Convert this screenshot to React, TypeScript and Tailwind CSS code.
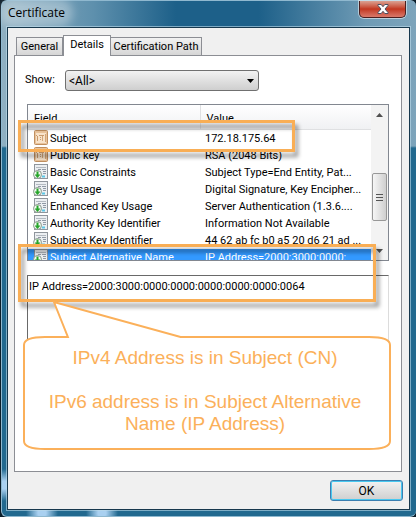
import React from 'react';

type Field = {
  name: string;
  value: string;
  extension?: boolean;
  selected?: boolean;
};

const fields: Field[] = [
  { name: 'Subject', value: '172.18.175.64' },
  { name: 'Public key', value: 'RSA (2048 Bits)' },
  { name: 'Basic Constraints', value: 'Subject Type=End Entity, Pat...', extension: true },
  { name: 'Key Usage', value: 'Digital Signature, Key Encipher...', extension: true },
  { name: 'Enhanced Key Usage', value: 'Server Authentication (1.3.6....', extension: true },
  { name: 'Authority Key Identifier', value: 'Information Not Available', extension: true },
  { name: 'Subject Key Identifier', value: '44 62 ab fc b0 a5 20 d6 21 ad ...', extension: true },
  { name: 'Subject Alternative Name', value: 'IP Address=2000:3000:0000:', extension: true, selected: true },
];

const PropertyIcon: React.FC = () => (
  <svg width="16" height="16" viewBox="0 0 16 16" className="block">
    <rect x="1.5" y="0.5" width="13" height="14" rx="1" fill="#e9c39b" stroke="#c08f60" />
    <rect x="3" y="3" width="10" height="10" fill="#f8e3cb" />
    <path d="M3 5.5h1M6 5.5h5M4.5 6v5M7 7.5h1M7 9.5h1" stroke="#c99a6c" fill="none" />
    <path d="M9.5 6v5M12.5 4v8" stroke="#d3a679" fill="none" />
  </svg>
);

const ExtensionIcon: React.FC = () => (
  <svg width="16" height="16" viewBox="0 0 16 16" className="block">
    <rect x="1.5" y="0.5" width="13" height="14" fill="#eceff2" stroke="#8f959c" />
    <path d="M3 3.5h10" stroke="#b4bac1" />
    <path d="M5 5.5h3M9 5.5h4M10 7.5h3M10 9.5h3" stroke="#9099a5" />
    <path d="M9 12.5h3" stroke="#5cc7e6" strokeWidth="2" />
    <circle cx="4.5" cy="10.5" r="4" fill="#f7fbf5" stroke="#87948a" />
    <path d="M3.500 7.500h2v3h2l-3 3.500-3-3.500h2z" fill="#27a52b" />
  </svg>
);

const TitleBar: React.FC = () => (
  <header className="flex h-[26px] items-start justify-between pr-1">
    <h1 className="my-[5px] rounded-full bg-white/30 px-px font-['Open_Sans',sans-serif] text-[12px] leading-[14px] text-black shadow-[0_0_9px_7px_rgba(255,255,255,0.3)]">
      Certificate
    </h1>
    <button
      type="button"
      aria-label="Close"
      className="flex h-[17px] w-[47px] items-center justify-center rounded-b-[5px] border border-t-0 border-[#4c1f1f] bg-linear-to-b from-[#d9a092] from-0% via-[#c2361f] via-50% to-[#d9786a] shadow-[0_0_0_1px_rgba(255,255,255,0.5)]"
    >
      <svg width="12" height="10" viewBox="0 0 12 10">
        <path d="M1 .5h3.200L6 2.700 7.800.5H11v1L8 5l3 3.500v1H7.800L6 7.300 4.200 9.500H1v-1L4 5 1 1.500z" fill="#fff" stroke="#4a4f60" />
      </svg>
    </button>
  </header>
);

const Tabs: React.FC = () => (
  <div role="tablist" className="flex items-end pl-[2px] text-[11px] leading-[16px]">
    <button type="button" role="tab" aria-selected="false" className="h-[18px] w-[47px] whitespace-nowrap border border-b-0 border-[#8c8e94] bg-linear-to-b from-[#f2f2f2] to-[#d6d6d6]">
      General
    </button>
    <button type="button" role="tab" aria-selected="true" className="z-10 -mb-px h-[21px] w-[48px] whitespace-nowrap border border-b-0 border-[#8c8e94] bg-white pb-[2px]">
      Details
    </button>
    <button type="button" role="tab" aria-selected="false" className="h-[18px] w-[91px] whitespace-nowrap border border-b-0 border-l-0 border-[#8c8e94] bg-linear-to-b from-[#f2f2f2] to-[#d6d6d6]">
      Certification Path
    </button>
  </div>
);

const ScrollBar: React.FC = () => (
  <div className="flex w-[17px] shrink-0 flex-col items-center bg-[#f3f3f3]">
    <svg width="17" height="17" viewBox="0 0 17 17">
      <path d="M5 12l3.500-4 3.500 4z" fill="#505050" />
    </svg>
    <div className="mt-[51px] flex h-[48px] w-[15px] flex-col items-center justify-center gap-[2px] rounded-[2px] border border-[#989898] bg-linear-to-r from-[#f6f6f6] to-[#cfcfcf]">
      <span className="h-px w-[7px] bg-[#555]" />
      <span className="h-px w-[7px] bg-[#555]" />
      <span className="h-px w-[7px] bg-[#555]" />
    </div>
    <svg width="17" height="17" viewBox="0 0 17 17" className="mt-auto">
      <path d="M5 6l3.500 4L12 6z" fill="#505050" />
    </svg>
  </div>
);

const FieldList: React.FC = () => (
  <div className="flex h-[157px] overflow-hidden border border-[#828790] bg-white">
    <div className="min-w-0 flex-1 overflow-hidden">
      <table className="w-full table-fixed border-collapse text-left text-[11px] leading-[17px]">
        <thead>
          <tr className="h-[24px] bg-linear-to-b from-white to-[#f0f1f3]">
            <th className="w-[172px] border-r border-b border-[#dfe0e2] pt-[3px] pl-[6px] font-normal">Field</th>
            <th className="border-b border-[#dfe0e2] pt-[3px] pl-[6px] font-normal">Value</th>
          </tr>
        </thead>
        <tbody>
          {fields.map((field) => (
            <tr key={field.name} className={field.selected ? 'h-[17px] bg-[#3399ff] text-white' : 'h-[17px]'}>
              <td className="p-0">
                <div className="flex h-[17px] items-center gap-[1px] whitespace-nowrap pl-[5px]">
                  {field.extension ? <ExtensionIcon /> : <PropertyIcon />}
                  <span>{field.name}</span>
                </div>
              </td>
              <td className="overflow-hidden whitespace-nowrap p-0 pl-[5px]">{field.value}</td>
            </tr>
          ))}
        </tbody>
      </table>
    </div>
    <ScrollBar />
  </div>
);

const Callout: React.FC = () => (
  <div className="absolute top-[245px] right-[10px] left-[8px]">
    <svg width="100%" height="150" viewBox="0 0 369 150" preserveAspectRatio="none" className="block overflow-visible">
      <path
        d="M31 1L45 36H22Q1 36 1 44V140Q1 148 22 148H347Q368 148 368 140V44Q368 36 347 36H158Z"
        fill="#fff"
        stroke="#fbb05a"
        strokeWidth="2"
      />
    </svg>
    <p className="absolute top-[46px] right-0 -left-1 text-center font-['Liberation_Sans',sans-serif] text-[19px] leading-[22px] text-[#fbb05a]">
      IPv4 Address is in Subject (CN)
      <br />
      <br />
      IPv6 address is in Subject Alternative
      <br />
      Name (IP Address)
    </p>
  </div>
);

export default function App() {
  return (
    <div className="flex min-h-screen flex-col bg-[#0b1d29] pl-px font-['Roboto',sans-serif] text-black">
      <main className="flex flex-1 flex-col rounded-[6px] border border-r-0 border-[#8fb8cf] bg-[radial-gradient(circle_at_2px_484px,#a9d0f0_4px,transparent_16px),radial-gradient(circle_at_40px_512px,#a9d0f0_4px,transparent_16px),radial-gradient(circle_at_100px_512px,#a9d0f0_4px,transparent_16px),linear-gradient(180deg,transparent_145px,#22698f_147px),linear-gradient(90deg,#8fb0c2_0%,#5e90ad_22%,#1d6089_42%,#1d6089_62%,#6f9bb5_88%,#7da4bb_100%)] pr-[6px] pb-[6px] pl-[5px]">
        <TitleBar />
        <div className="flex flex-1 flex-col border border-[#17384d] bg-[#f0f0f0] pt-[7px] pl-[6px] shadow-[0_0_0_1px_rgba(190,220,235,0.6)]">
          <Tabs />
          <section className="relative mr-[7px] h-[417px] border border-[#8c8e94] bg-white px-[12px] pt-[14px]">
            <div className="flex items-center text-[11px]">
              <label htmlFor="show" className="-ml-[2px] w-[40px]">Show:</label>
              <div className="relative">
                <select
                  id="show"
                  className="h-[21px] w-[194px] appearance-none rounded-[3px] border border-[#707070] bg-linear-to-b from-[#f2f2f2] to-[#cfcfcf] pl-[3px] text-[12px]"
                >
                  <option>&lt;All&gt;</option>
                </select>
                <svg width="7" height="4" viewBox="0 0 7 4" className="pointer-events-none absolute top-[9px] right-[5px]">
                  <path d="M0 0h7L3.500 4z" fill="#000" />
                </svg>
              </div>
            </div>
            <div className="mt-[13px]">
              <FieldList />
            </div>
            <textarea
              readOnly
              aria-label="Field value"
              defaultValue="IP Address=2000:3000:0000:0000:0000:0000:0000:0064"
              className="mt-[14px] block h-[160px] w-full resize-none border border-[#dcdcdc] border-t-[#696969] border-l-[#696969] bg-white px-px pt-[2px] text-[11px] leading-[17px]"
            />
            <div className="absolute top-[64px] left-[3px] h-[32px] w-[277px] border-3 border-[#f9ae55] drop-shadow-[3px_5px_2px_rgba(0,0,0,0.45)]" />
            <div className="absolute top-[188px] right-[25px] left-[3px] h-[58px] border-3 border-[#f9ae55] drop-shadow-[3px_5px_2px_rgba(0,0,0,0.45)]" />
            <Callout />
          </section>
          <footer className="flex justify-end pt-[8px] pr-[6px] pb-[7px]">
            <button
              type="button"
              className="h-[21px] w-[73px] rounded-[3px] border border-[#3c7fb1] bg-linear-to-b from-[#f2f2f2] to-[#cfcfcf] text-[12px] leading-[16px] shadow-[inset_0_0_0_1px_#48c8f0]"
            >
              OK
            </button>
          </footer>
        </div>
      </main>
    </div>
  );
}
